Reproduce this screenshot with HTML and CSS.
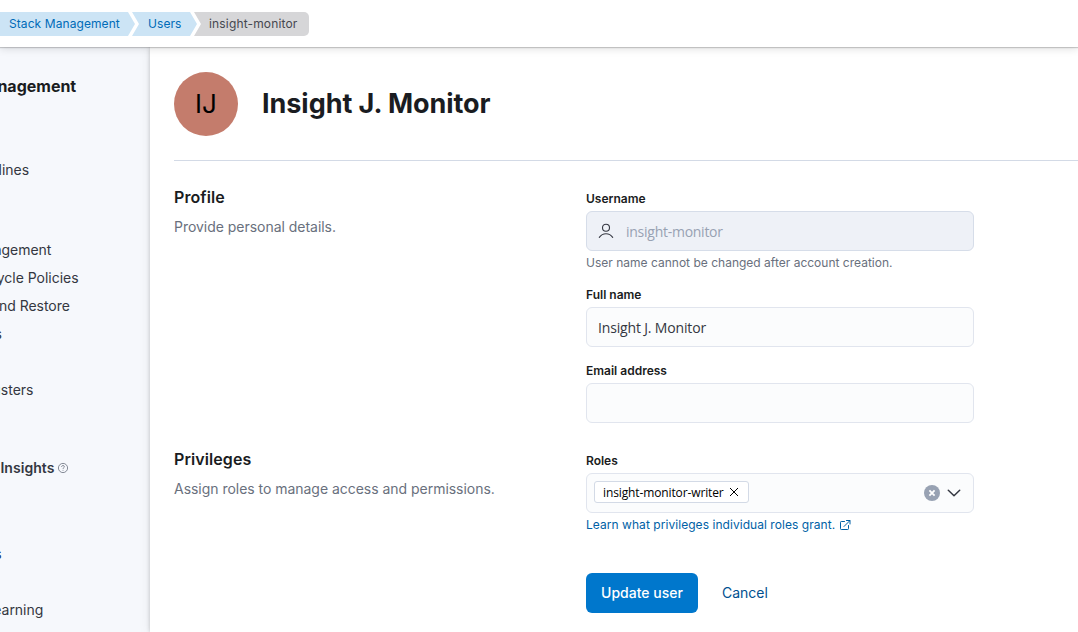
FILE: index.html
```html
<!DOCTYPE html>
<html lang="en">
<head>
<meta charset="utf-8">
<title>Insight J. Monitor</title>
<link rel="stylesheet" href="styles.css">
</head>
<body>
<header class="topbar">
  <nav class="crumbs">
    <a class="crumb crumb-first">Stack Management</a>
    <a class="crumb crumb-mid">Users</a>
    <span class="crumb crumb-last">insight-monitor</span>
  </nav>
</header>
<div class="shell">
  <aside class="sidebar">
    <nav class="side-nav">
      <h2 class="side-title">Stack Management</h2>
      <ul class="side-list ingest">
        <li>Ingest Pipelines</li>
      </ul>
      <ul class="side-list data">
        <li>Index Management</li>
        <li>Index Lifecycle Policies</li>
        <li>Snapshot and Restore</li>
        <li>Rollup Jobs</li>
        <li class="skip-one">Remote Clusters</li>
      </ul>
      <h3 class="side-group">Alerts and Insights
        <svg class="help" viewBox="0 0 12 12" fill="none" stroke="currentColor"><circle cx="6" cy="6" r="4.6" stroke-width=".8"/><path d="M4.6 5c0-1 .6-1.5 1.4-1.5S7.400 4 7.400 4.800C7.400 5.700 6 5.700 6 6.900M6 7.900v.8" stroke-width=".8"/></svg>
      </h3>
      <ul class="side-list insights">
        <li class="current">Connectors</li>
        <li class="skip-one">Machine Learning</li>
      </ul>
    </nav>
  </aside>
  <main class="main">
    <div class="page-head">
      <div class="avatar">IJ</div>
      <h1 class="page-title">Insight J. Monitor</h1>
    </div>
    <section class="group">
      <div class="about">
        <h2 class="group-title">Profile</h2>
        <p class="group-text">Provide personal details.</p>
      </div>
      <div class="fields">
        <div class="field">
          <div class="label">Username</div>
          <div class="control disabled">
            <svg class="user" viewBox="0 0 16 16" fill="none" stroke="currentColor" stroke-width="1.1" stroke-linecap="round"><circle cx="8" cy="4.700" r="3.500"/><path d="M1.300 14.400C3 11.900 5.200 10.700 8 10.700s5 1.200 6.700 3.700"/></svg>
            <span class="value">insight-monitor</span>
          </div>
          <div class="hint">User name cannot be changed after account creation.</div>
        </div>
        <div class="field">
          <div class="label">Full name</div>
          <div class="control"><span class="value">Insight J. Monitor</span></div>
        </div>
        <div class="field">
          <div class="label">Email address</div>
          <div class="control"></div>
        </div>
      </div>
    </section>
    <section class="group privileges">
      <div class="about">
        <h2 class="group-title">Privileges</h2>
        <p class="group-text">Assign roles to manage access and permissions.</p>
      </div>
      <div class="fields">
        <div class="field">
          <div class="label">Roles</div>
          <div class="control combo">
            <span class="pill"><span class="pill-text">insight-monitor-writer</span>
              <svg class="cross" viewBox="0 0 10 10" fill="none" stroke="currentColor" stroke-width="1"><path d="M1 1l8 8M9 1L1 9"/></svg>
            </span>
            <svg class="clear" viewBox="0 0 16 16"><circle cx="8" cy="8" r="8" fill="#98a2b3"/><path d="M5.400 5.400l5.200 5.200M10.600 5.400l-5.200 5.200" stroke="#fff" stroke-width="1.800"/></svg>
            <svg class="chevron" viewBox="0 0 16 16" fill="none" stroke="currentColor" stroke-width="1.500" stroke-linecap="round" stroke-linejoin="round"><path d="M2.300 5.300L8 10.700l5.700-5.400"/></svg>
          </div>
          <a class="hint link"><span class="link-text">Learn what privileges individual roles grant.</span>
            <svg class="external" viewBox="0 0 12 12" fill="none" stroke="currentColor" stroke-width="1" stroke-linecap="round" stroke-linejoin="round"><path d="M5.500 2.500H2.300Q1.500 2.500 1.500 3.300v6.400q0 .8.8.8h6.400q.8 0 .8-.8V6.500M7.500 1.500h3.500v3.500M10.800 1.700L5 7.500"/></svg>
          </a>
        </div>
      </div>
    </section>
    <div class="actions">
      <button class="btn primary">Update user</button>
      <button class="btn text">Cancel</button>
    </div>
  </main>
</div>
</body>
</html>
```
FILE: styles.css
```css
* { box-sizing: border-box; }
body {
  margin: 0;
  height: 632px;
  overflow: hidden;
  display: flex;
  flex-direction: column;
  background: #fff;
  color: #343741;
  font: 14px/20px Inter, sans-serif;
}
h1, h2, h3, p, ul { margin: 0; padding: 0; }
ul { list-style: none; }
svg { flex: none; display: block; }

.topbar {
  height: 47px;
  flex: none;
  padding-top: 12px;
  background: #fff;
  box-shadow: 0 1px 1px rgba(0, 0, 0, .18), 0 2px 8px rgba(0, 0, 0, .12);
  z-index: 2;
}
.crumbs { display: flex; }
.crumb {
  height: 24px;
  font-size: 12px;
  line-height: 24px;
  letter-spacing: .08px;
  background: #cce4f5;
  color: #006bb8;
  white-space: nowrap;
}
.crumb-first {
  width: 135px;
  padding-left: 9px;
  clip-path: polygon(0 0, 128px 0, 100% 50%, 128px 100%, 0 100%);
}
.crumb-mid {
  width: 65px;
  margin-left: -3px;
  padding-left: 16px;
  clip-path: polygon(0 0, 58px 0, 100% 50%, 58px 100%, 0 100%, 7px 50%);
}
.crumb-last {
  width: 115px;
  margin-left: -3px;
  padding-left: 15px;
  letter-spacing: .16px;
  border-radius: 0 5px 5px 0;
  background: #d6d6d8;
  color: #45474f;
  clip-path: polygon(0 0, 100% 0, 100% 100%, 0 100%, 7px 50%);
}

.shell { flex: 1; display: flex; min-height: 0; }
.sidebar {
  width: 150px;
  flex: none;
  overflow: hidden;
  background: #f6f8fc;
}
.side-nav { margin-left: -75px; padding-top: 27px; white-space: nowrap; }
.side-title {
  font-size: 16px;
  line-height: 24px;
  font-weight: 700;
  color: #1a1c21;
}
.side-list li { height: 28px; line-height: 28px; letter-spacing: -.02px; }
.side-list .current { color: #1d3566; }
.ingest { padding-top: 58px; }
.data { padding-top: 52px; }
.side-list .skip-one { margin-top: 28px; }
.side-group {
  display: flex;
  align-items: center;
  gap: 3px;
  margin: 54px 0 0 2px;
  font-size: 14px;
  line-height: 20px;
  font-weight: 600;
  letter-spacing: .05px;
}
.help { width: 12px; height: 12px; color: #69707d; }
.insights { padding-top: 62px; }

.main {
  flex: 1;
  padding: 25px 0 0 24px;
  background: #fff;
  box-shadow: 0 0 4px rgba(0, 0, 0, .2), 0 0 12px rgba(0, 0, 0, .08);
}
.page-head {
  display: flex;
  align-items: center;
  gap: 24px;
  height: 89px;
  padding-bottom: 24px;
  border-bottom: 1px solid #d3dae6;
}
.avatar {
  width: 64px;
  height: 64px;
  border-radius: 50%;
  background: #c47c6c;
  color: #000;
  font-size: 26px;
  line-height: 64px;
  text-align: center;
}
.page-title {
  font-size: 27px;
  line-height: 32px;
  font-weight: 700;
  letter-spacing: -.05px;
  color: #1a1c21;
}

.group { display: flex; padding-top: 24px; }
.about { width: 412px; flex: none; }
.group-title {
  font-size: 16px;
  line-height: 24px;
  font-weight: 600;
  letter-spacing: .08px;
  color: #1a1c21;
}
.group-text { margin-top: 8px; letter-spacing: -.03px; color: #69707d; }
.fields { width: 388px; display: flex; flex-direction: column; gap: 16px; padding-top: 6px; }
.label { font-size: 12px; line-height: 16px; font-weight: 600; color: #1a1c21; }
.control {
  height: 40px;
  margin-top: 4px;
  padding: 0 12px;
  display: flex;
  align-items: center;
  border: 1px solid #e1e5ee;
  border-radius: 6px;
  background: #fbfcfd;
}
.control .value {
  padding-top: 2px;
  margin-left: -1px;
  font: 14px/20px "Open Sans", sans-serif;
  letter-spacing: -.16px;
}
.disabled { padding-left: 11px; background: #eef1f7; border-color: #d6dde9; }
.disabled .value { margin-left: 12px; letter-spacing: -.26px; color: #98a2b3; }
.user { width: 16px; height: 16px; }
.hint { padding-top: 4px; font-size: 12px; line-height: 16px; letter-spacing: .01px; color: #69707d; }
.privileges { padding-top: 24px; }
.combo { padding: 0 11px 0 7px; }
.pill {
  height: 22px;
  width: 155px;
  padding: 0 9px 0 8px;
  margin-top: -3px;
  display: flex;
  align-items: center;
  justify-content: space-between;
  border: 1px solid #d3dae6;
  border-radius: 3px;
  background: #fff;
  color: #000;
}
.pill-text {
  padding-top: 2px;
  font: 500 12px/20px "Open Sans", sans-serif;
  letter-spacing: -.12px;
}
.cross { width: 10px; height: 10px; }
.clear { width: 16px; height: 16px; margin-left: auto; }
.chevron { width: 16px; height: 16px; margin-left: 6px; }
.link { display: flex; align-items: center; gap: 4px; color: #0061a6; }
.link-text { letter-spacing: .05px; }
.external { width: 12px; height: 12px; }

.actions { display: flex; padding: 40px 0 0 412px; }
.btn {
  height: 40px;
  padding: 0;
  border: 0;
  border-radius: 6px;
  background: none;
  font: 500 14px/40px Inter, sans-serif;
}
.primary { width: 112px; background: #0077cc; color: #fff; }
.text { margin-left: 24px; color: #00508f; font-weight: 400; }
```
